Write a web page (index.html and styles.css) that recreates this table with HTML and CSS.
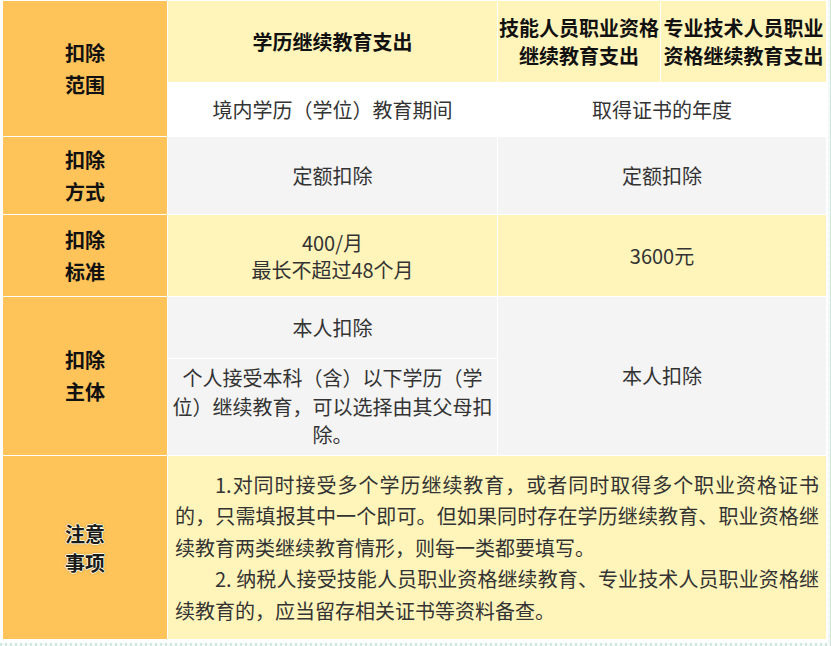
FILE: index.html
```html
<!DOCTYPE html>
<html lang="zh-CN">
<head>
<meta charset="utf-8">
<title>继续教育支出</title>
<link rel="stylesheet" href="styles.css">
</head>
<body>
<div class="sheet">
  <div class="grid">
    <div class="cell label scope">扣除<br>范围</div>
    <div class="cell head c2">学历继续教育支出</div>
    <div class="cell head c3">技能人员职业资格<br>继续教育支出</div>
    <div class="cell head c4">专业技术人员职业<br>资格继续教育支出</div>
    <div class="cell white c2 r2">境内学历（学位）教育期间</div>
    <div class="cell white c34 r2">取得证书的年度</div>

    <div class="cell label r3">扣除<br>方式</div>
    <div class="cell gray c2 r3">定额扣除</div>
    <div class="cell gray c34 r3">定额扣除</div>

    <div class="cell label r4">扣除<br>标准</div>
    <div class="cell yellow c2 r4 tight">400/月<br>最长不超过48个月</div>
    <div class="cell yellow c34 r4">3600元</div>

    <div class="cell label subject">扣除<br>主体</div>
    <div class="cell gray c2 r5a">本人扣除</div>
    <div class="cell gray c2 r5b tight wrap">个人接受本科（含）以下学历（学位）继续教育，可以选择由其父母扣除。</div>
    <div class="cell gray c34 r5">本人扣除</div>

    <div class="cell label glow r6">注意<br>事项</div>
    <div class="cell yellow notes r6">
      <p>1.对同时接受多个学历继续教育，或者同时取得多个职业资格证书的，只需填报其中一个即可。但如果同时存在学历继续教育、职业资格继续教育两类继续教育情形，则每一类都要填写。</p>
      <p>2. 纳税人接受技能人员职业资格继续教育、专业技术人员职业资格继续教育的，应当留存相关证书等资料备查。</p>
    </div>
  </div>
</div>
</body>
</html>
```

FILE: styles.css
```css
html, body {
  margin: 0;
  padding: 0;
}
body {
  width: 831px;
  height: 646px;
  overflow: hidden;
  background-color: #eef8f4;
  background-image: repeating-linear-gradient(90deg, #cfe8df 0 2px, transparent 2px 5px),
                    repeating-linear-gradient(0deg, #f6fbf9 0 3px, transparent 3px 6px);
  font-family: "Noto Sans CJK SC", "Noto Sans", sans-serif;
  font-size: 20px;
  color: #333;
}
.sheet {
  width: 823px;
  height: 638px;
  padding: 1px 2px 4px 3px;
  background: #fff;
}
.grid {
  display: grid;
  grid-template-columns: 164px 329px 162px 165px;
  grid-template-rows: 81px 53px 77px 81px 61px 96px 183px;
  gap: 1px;
  background: #fff;
}
.cell {
  display: flex;
  flex-direction: column;
  align-items: center;
  justify-content: center;
  text-align: center;
  line-height: 28px;
  padding: 0 4px;
}
.label {
  grid-column: 1;
  background: #fec359;
  color: #111;
  font-weight: bold;
  line-height: 32px;
}
.scope { grid-row: 1 / 3; }
.subject { grid-row: 5 / 7; }
.head {
  grid-row: 1;
  background: #fff5ba;
  color: #111;
  font-weight: bold;
  line-height: 28px;
  padding: 0 1px;
  white-space: nowrap;
}
.c2 { grid-column: 2; }
.c3 { grid-column: 3; }
.c4 { grid-column: 4; }
.c34 { grid-column: 3 / 5; }
.r2 { grid-row: 2; }
.r3 { grid-row: 3; }
.r4 { grid-row: 4; }
.r5a { grid-row: 5; }
.r5b { grid-row: 6; }
.r5 { grid-row: 5 / 7; }
.r6 { grid-row: 7; }
.label.r3, .label.r4, .label.r6 { grid-column: 1; }
.white { background: #fff; }
.gray { background: #f4f4f4; }
.yellow { background: #fff5ba; }
.tight { line-height: 27px; }
.wrap { line-height: 28.5px; padding: 0 4px; }
.glow {
  line-height: 29px;
  color: #1a1a1a;
  text-shadow: 1px 0 0 #fffbe0, -1px 0 0 #fffbe0, 0 1px 0 #fffbe0, 0 -1px 0 #fffbe0,
               0 0 3px #8a6a20;
}
.notes {
  grid-column: 2 / 5;
  align-items: stretch;
  text-align: justify;
  line-height: 31.5px;
  padding: 0 7px;
}
.notes p {
  margin: 0;
  text-indent: 2em;
}
```
